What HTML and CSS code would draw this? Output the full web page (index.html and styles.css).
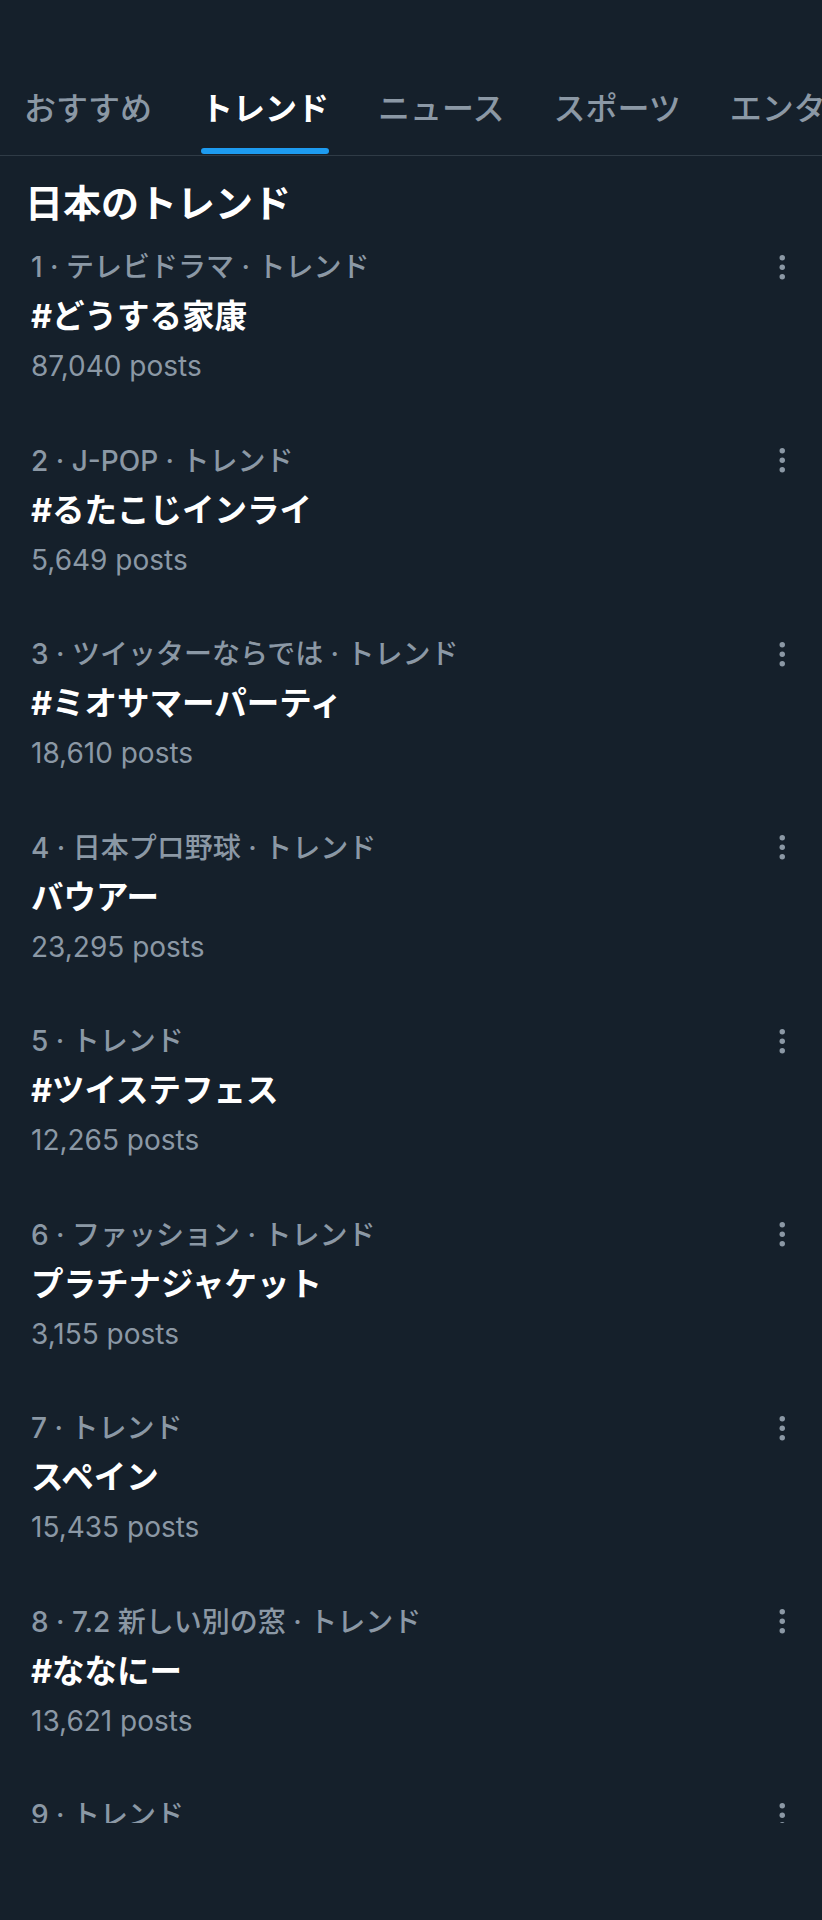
FILE: index.html
```html
<!DOCTYPE html>
<html lang="ja">
<head>
    <meta charset="UTF-8">
    <meta name="viewport" content="width=device-width, initial-scale=1.0">
    <title>トレンド</title>
    <link rel="stylesheet" href="styles.css">
</head>
<body>
    <div class="topbar"></div>

    <nav class="tabs">
        <div class="tab"><span class="tab-label">おすすめ</span></div>
        <div class="tab active"><span class="tab-label">トレンド</span><span class="tab-bar"></span></div>
        <div class="tab"><span class="tab-label">ニュース</span></div>
        <div class="tab"><span class="tab-label">スポーツ</span></div>
        <div class="tab"><span class="tab-label">エンタメ</span></div>
    </nav>

    <h1 class="section-title">日本のトレンド</h1>

    <div class="trend-list">
        <div class="trend">
            <div class="trend-text">
                <div class="trend-meta">1 · テレビドラマ · トレンド</div>
                <div class="trend-name">#どうする家康</div>
                <div class="trend-count">87,040 posts</div>
            </div>
            <svg class="more" viewBox="0 0 24 24"><circle cx="12" cy="5" r="2"/><circle cx="12" cy="12" r="2"/><circle cx="12" cy="19" r="2"/></svg>
        </div>

        <div class="trend">
            <div class="trend-text">
                <div class="trend-meta">2 · J-POP · トレンド</div>
                <div class="trend-name">#るたこじインライ</div>
                <div class="trend-count">5,649 posts</div>
            </div>
            <svg class="more" viewBox="0 0 24 24"><circle cx="12" cy="5" r="2"/><circle cx="12" cy="12" r="2"/><circle cx="12" cy="19" r="2"/></svg>
        </div>

        <div class="trend">
            <div class="trend-text">
                <div class="trend-meta">3 · ツイッターならでは · トレンド</div>
                <div class="trend-name">#ミオサマーパーティ</div>
                <div class="trend-count">18,610 posts</div>
            </div>
            <svg class="more" viewBox="0 0 24 24"><circle cx="12" cy="5" r="2"/><circle cx="12" cy="12" r="2"/><circle cx="12" cy="19" r="2"/></svg>
        </div>

        <div class="trend">
            <div class="trend-text">
                <div class="trend-meta">4 · 日本プロ野球 · トレンド</div>
                <div class="trend-name">バウアー</div>
                <div class="trend-count">23,295 posts</div>
            </div>
            <svg class="more" viewBox="0 0 24 24"><circle cx="12" cy="5" r="2"/><circle cx="12" cy="12" r="2"/><circle cx="12" cy="19" r="2"/></svg>
        </div>

        <div class="trend">
            <div class="trend-text">
                <div class="trend-meta">5 · トレンド</div>
                <div class="trend-name">#ツイステフェス</div>
                <div class="trend-count">12,265 posts</div>
            </div>
            <svg class="more" viewBox="0 0 24 24"><circle cx="12" cy="5" r="2"/><circle cx="12" cy="12" r="2"/><circle cx="12" cy="19" r="2"/></svg>
        </div>

        <div class="trend">
            <div class="trend-text">
                <div class="trend-meta">6 · ファッション · トレンド</div>
                <div class="trend-name">プラチナジャケット</div>
                <div class="trend-count">3,155 posts</div>
            </div>
            <svg class="more" viewBox="0 0 24 24"><circle cx="12" cy="5" r="2"/><circle cx="12" cy="12" r="2"/><circle cx="12" cy="19" r="2"/></svg>
        </div>

        <div class="trend">
            <div class="trend-text">
                <div class="trend-meta">7 · トレンド</div>
                <div class="trend-name">スペイン</div>
                <div class="trend-count">15,435 posts</div>
            </div>
            <svg class="more" viewBox="0 0 24 24"><circle cx="12" cy="5" r="2"/><circle cx="12" cy="12" r="2"/><circle cx="12" cy="19" r="2"/></svg>
        </div>

        <div class="trend">
            <div class="trend-text">
                <div class="trend-meta">8 · 7.2 新しい別の窓 · トレンド</div>
                <div class="trend-name">#ななにー</div>
                <div class="trend-count">13,621 posts</div>
            </div>
            <svg class="more" viewBox="0 0 24 24"><circle cx="12" cy="5" r="2"/><circle cx="12" cy="12" r="2"/><circle cx="12" cy="19" r="2"/></svg>
        </div>

        <div class="trend">
            <div class="trend-text">
                <div class="trend-meta">9 · トレンド</div>
                <div class="trend-name">#七夕</div>
                <div class="trend-count">10,482 posts</div>
            </div>
            <svg class="more" viewBox="0 0 24 24"><circle cx="12" cy="5" r="2"/><circle cx="12" cy="12" r="2"/><circle cx="12" cy="19" r="2"/></svg>
        </div>
    </div>

    <div class="bottombar"></div>
</body>
</html>
```
FILE: styles.css
```css
body {
    margin: 0;
    padding: 0;
    height: 100vh;
    display: flex;
    flex-direction: column;
    overflow: hidden;
    background-color: #15202b;
    color: #f7f9f9;
    font-family: Inter, "Noto Sans CJK JP", sans-serif;
}

.topbar {
    height: 62px;
    flex-shrink: 0;
}

.tabs {
    display: flex;
    flex-shrink: 0;
    border-bottom: 1px solid #2f3b46;
    white-space: nowrap;
    overflow: hidden;
}

.tab {
    display: flex;
    flex-direction: column;
    align-items: stretch;
    flex-shrink: 0;
    height: 93px;
    padding: 22px 24.5px 0;
    box-sizing: border-box;
    color: #8b98a5;
}

.tab:first-child {
    padding-left: 24px;
}

.tab-label {
    font-size: 32px;
    line-height: 50px;
    font-weight: 500;
}

.tab.active {
    color: #ffffff;
}

.tab.active .tab-label {
    font-weight: 700;
}

.tab-bar {
    height: 6px;
    margin-top: 14px;
    border-radius: 3px;
    background-color: #1d9bf0;
}

.section-title {
    margin: 0;
    padding: 25px 25px 0;
    font-size: 38px;
    line-height: 44px;
    font-weight: 700;
    color: #ffffff;
    flex-shrink: 0;
}

.trend-list {
    flex: 1;
    overflow: hidden;
}

.trend {
    display: flex;
    justify-content: space-between;
    align-items: flex-start;
    height: 193.5px;
    padding: 17px 24px 0 31px;
    box-sizing: border-box;
}

.trend-meta {
    font-size: 28px;
    line-height: 50px;
    font-weight: 500;
    color: #8b98a5;
}

.trend-name {
    font-size: 32.5px;
    line-height: 50px;
    font-weight: 700;
    color: #ffffff;
}

.trend-count {
    font-size: 28px;
    line-height: 48px;
    color: #8b98a5;
}

.more {
    width: 32.5px;
    height: 32.5px;
    margin-top: 8.75px;
    fill: #8b98a5;
}

.bottombar {
    height: 97px;
    flex-shrink: 0;
}
```
